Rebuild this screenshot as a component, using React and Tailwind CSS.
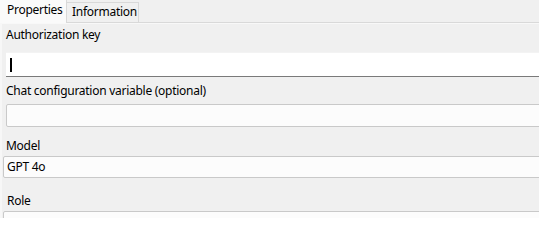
export default function App() {
  const font = { fontFamily: '"Noto Sans", "Open Sans", sans-serif' };
  return (
    <div className="w-[539px] h-[218px] overflow-hidden bg-[#f0f0f0] text-[12px] tracking-[-0.27px] text-black" style={font}>
      {/* Tab strip */}
      <div className="flex h-[23px] items-end border-b border-[#d9d9d9]">
        <div className="relative z-10 -mb-px h-[23px] w-[67px] shrink-0 border-r border-[#d9d9d9] bg-[#fafafa] pl-[7px] pt-[2px] leading-4">
          Properties
        </div>
        <div className="h-[20px] w-[72px] shrink-0 border-t border-r border-[#d9d9d9] bg-[#f0f0f0] pl-[5px] pt-[1px] leading-4">
          Information
        </div>
      </div>
      {/* Panel */}
      <div className="w-[580px] border-l-2 border-[#f7f7f7] pt-[4px]">
        <div className="-mt-[4px] border-t border-[#f8f8f8] pt-[3px]" />
        <div className="pl-[4px] leading-4">Authorization key</div>
        <div className="ml-[4px] mt-[9px] flex h-[25px] items-center border-t border-[#f3f3f3] border-b border-b-[#7a7a7a] bg-white pl-[4px]">
          <div className="h-[14px] w-[2px] bg-black" />
        </div>
        <div className="mt-[6px] pl-[4px] leading-4">Chat configuration variable (optional)</div>
        <div className="ml-[4px] mt-[5px] h-[23px] rounded-[2px] border border-[#c9c9c9] bg-[#fcfcfc]" />
        <div className="mt-[11px] pl-[4px] leading-4">Model</div>
        <div className="ml-[1px] mt-[2px] flex h-[22px] items-center rounded-[2px] border border-[#c9c9c9] bg-[#fcfcfc] pl-[3px] leading-4">
          GPT 4o
        </div>
        <div className="mt-[15px] pl-[5px] leading-4">Role</div>
        <div className="ml-[1px] mt-[2px] h-[22px] rounded-[2px] border border-[#c9c9c9] bg-[#fcfcfc]" />
      </div>
    </div>
  );
}
